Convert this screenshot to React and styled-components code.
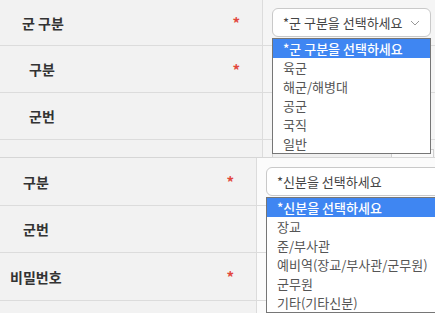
import React from 'react';
import styled, { createGlobalStyle } from 'styled-components';

const GlobalStyle = createGlobalStyle`
    body {
        margin: 0;
        background: #f2f2f2;
        font-family: "Noto Sans CJK KR", "Noto Sans", sans-serif;
    }
`;

const branchOptions = ['*군 구분을 선택하세요', '육군', '해군/해병대', '공군', '국직', '일반'];
const rankOptions = ['*신분을 선택하세요', '장교', '준/부사관', '예비역(장교/부사관/군무원)', '군무원', '기타(기타신분)'];

function Chevron() {
    return (
        <svg width="10" height="6" viewBox="0 0 10 6">
            <polyline points="1,1 5,5 9,1" fill="none" stroke="#999" strokeWidth="1" />
        </svg>
    );
}

function SelectOpen({ width, options, chevron }) {
    return (
        <SelectWrap width={width}>
            <SelectBox>
                <span>{options[0]}</span>
                {chevron && <Chevron />}
            </SelectBox>
            <Dropdown>
                {options.map((o, i) => (
                    <Option key={o} active={i === 0}>{o}</Option>
                ))}
            </Dropdown>
        </SelectWrap>
    );
}

function Row({ height, labelWidth, indent, label, required, bg, children }) {
    return (
        <FormRow height={height} labelWidth={labelWidth}>
            <LabelCell indent={indent}>
                <Label>{label}</Label>
                {required && <Star>*</Star>}
            </LabelCell>
            <ValueCell bg={bg}>{children}</ValueCell>
        </FormRow>
    );
}

export default function App() {
    return (
        <Page>
            <GlobalStyle />
            <Panel height={157}>
                <Row height={46} labelWidth={263} indent={22} label="군 구분" required bg="#f5f5f5">
                    <SelectOpen width={159} options={branchOptions} chevron />
                </Row>
                <Row height={47} labelWidth={263} indent={29} label="구분" required bg="#f5f5f5" />
                <Row height={47} labelWidth={263} indent={29} label="군번" bg="#f5f5f5" />
                <Row height={47} labelWidth={263} indent={25} label="비밀번호" bg="#f5f5f5">
                    <Input />
                    <InputAddon />
                </Row>
            </Panel>
            <Panel height={156} topLine>
                <Row height={48} labelWidth={257} indent={23} label="구분" required bg="#fbfbfb">
                    <SelectOpen width={180} options={rankOptions} />
                </Row>
                <Row height={47} labelWidth={257} indent={23} label="군번" bg="#fbfbfb" />
                <Row height={48} labelWidth={257} indent={10} label="비밀번호" required bg="#fbfbfb" />
                <Row height={47} labelWidth={257} indent={10} label="" bg="#fbfbfb" />
            </Panel>
        </Page>
    );
}

const Page = styled.div`
    width: 435px;
    height: 313px;
    overflow: hidden;
`;

const Panel = styled.div`
    height: ${props => props.height}px;
    overflow: hidden;
    border-top: ${props => props.topLine ? '1px solid #d6d6d6' : 'none'};
    box-sizing: border-box;
`;

const FormRow = styled.div`
    display: grid;
    grid-template-columns: ${props => props.labelWidth}px 1fr;
    height: ${props => props.height}px;
    box-sizing: border-box;
    border-bottom: 1px solid #dcdcdc;
`;

const LabelCell = styled.div`
    display: flex;
    align-items: center;
    justify-content: space-between;
    padding: 0 22px 0 ${props => props.indent}px;
    background: #f2f2f2;
    border-right: 1px solid #dcdcdc;
`;

const Label = styled.span`
    font-size: 14px;
    font-weight: 700;
    color: #333;
`;

const Star = styled.span`
    font-size: 15px;
    font-weight: 700;
    color: #e2483d;
`;

const ValueCell = styled.div`
    display: flex;
    align-items: center;
    padding-left: 9px;
    background: ${props => props.bg};
`;

const SelectWrap = styled.div`
    position: relative;
    width: ${props => props.width}px;
    flex-shrink: 0;
    z-index: 2;
`;

const SelectBox = styled.div`
    display: flex;
    align-items: center;
    justify-content: space-between;
    height: 29px;
    box-sizing: border-box;
    padding: 0 10px;
    border: 1px solid #c9c9c9;
    border-radius: 6px;
    background: #fff;
    font-size: 13px;
    color: #444;
`;

const Dropdown = styled.div`
    position: absolute;
    top: calc(100% + 1px);
    left: 0;
    width: 100%;
    box-sizing: border-box;
    background: #fff;
    border: 1px solid #767676;
`;

const Option = styled.div`
    height: 19px;
    line-height: 19px;
    padding-left: 10px;
    font-size: 13px;
    white-space: nowrap;
    font-weight: ${props => props.active ? 500 : 400};
    color: ${props => props.active ? '#fff' : '#555'};
    background: ${props => props.active ? '#3f86f2' : 'transparent'};
`;

const Input = styled.div`
    width: 120px;
    height: 29px;
    box-sizing: border-box;
    border: 1px solid #d0d0d0;
    background: #f0f0f0;
`;

const InputAddon = styled.div`
    width: 42px;
    height: 29px;
    box-sizing: border-box;
    border: 1px solid #d0d0d0;
    border-left: none;
    background: #fafafa;
`;
